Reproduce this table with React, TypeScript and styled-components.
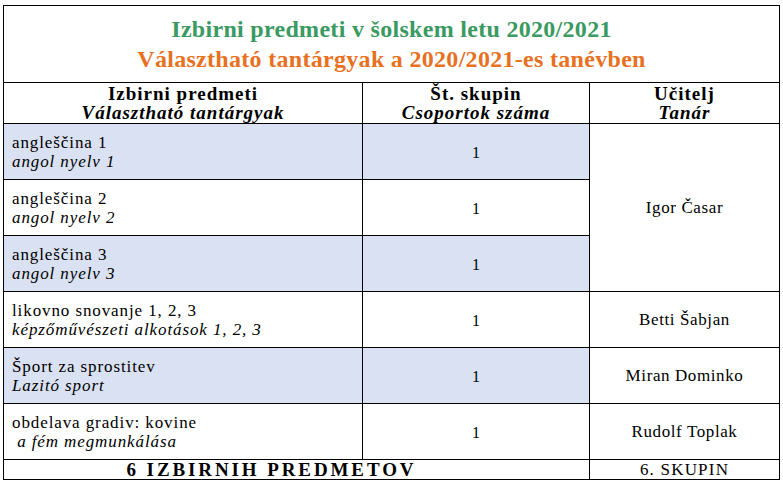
import React from 'react'
import styled, { createGlobalStyle } from 'styled-components'

const serif = '"Liberation Serif", "Times New Roman", serif'

const GlobalStyle = createGlobalStyle`
  html, body {
    margin: 0;
    padding: 0;
    background: #ffffff;
  }
  body {
    font-family: ${serif};
    color: #000000;
  }
`

const Page = styled.div`
  padding: 5px 0 0 3px;
`

const Table = styled.table`
  border-collapse: collapse;
  table-layout: fixed;
  width: 776px;
  border: 1px solid #000;
  font-family: ${serif};
  color: #000;
`

const TitleCell = styled.td`
  height: 76px;
  border: 1px solid #000;
  text-align: center;
  vertical-align: middle;
  padding: 0;
`

const TitleLine = styled.div<{ $color: string }>`
  font-family: ${serif};
  font-weight: bold;
  font-size: 24px;
  letter-spacing: 0.3px;
  line-height: 30px;
  color: ${p => p.$color};
`

const HeadCell = styled.th`
  height: 40px;
  border: 1px solid #000;
  padding: 0;
  text-align: center;
  vertical-align: middle;
  font-family: ${serif};
  font-weight: bold;
  font-size: 19px;
  letter-spacing: 1px;
  line-height: 19px;
`

const Sub = styled.span`
  display: block;
  font-style: italic;
`

const Row = styled.tr<{ $shaded?: boolean }>`
  height: 56px;
  background: ${p => (p.$shaded ? '#d9e1f2' : '#ffffff')};
`

const SubjectCell = styled.td`
  border: 1px solid #000;
  padding: 0 8px;
  vertical-align: middle;
  font-family: ${serif};
  font-size: 17px;
  letter-spacing: 0.9px;
  line-height: 19px;
  white-space: pre;
`

const CountCell = styled.td`
  border: 1px solid #000;
  text-align: center;
  vertical-align: middle;
  font-family: ${serif};
  font-size: 16px;
  padding: 2px 0 0 0;
`

const TeacherCell = styled.td`
  border: 1px solid #000;
  text-align: center;
  vertical-align: middle;
  font-family: ${serif};
  font-size: 17px;
  letter-spacing: 0.6px;
  background: #ffffff;
`

const FootCell = styled.td<{ $bold?: boolean; $shift?: number }>`
  height: 19px;
  border: 1px solid #000;
  padding: 0 ${p => p.$shift ?? 0}px 0 0;
  text-align: center;
  vertical-align: middle;
  font-family: ${serif};
  font-size: ${p => (p.$bold ? 19 : 17)}px;
  line-height: 19px;
  letter-spacing: ${p => (p.$bold ? 2.9 : 1.2)}px;
  font-weight: ${p => (p.$bold ? 'bold' : 'normal')};
`

type Subject = {
  sl: string
  hu: string
  count: string
  teacher?: string
  span?: number
  shaded?: boolean
}

const subjects: Subject[] = [
  { sl: 'angleščina 1', hu: 'angol nyelv 1', count: '1', teacher: 'Igor Časar', span: 3, shaded: true },
  { sl: 'angleščina 2', hu: 'angol nyelv 2', count: '1' },
  { sl: 'angleščina 3', hu: 'angol nyelv 3', count: '1', shaded: true },
  { sl: 'likovno snovanje 1, 2, 3', hu: 'képzőművészeti alkotások 1, 2, 3', count: '1', teacher: 'Betti Šabjan' },
  { sl: 'Šport za sprostitev', hu: 'Lazitó sport', count: '1', teacher: 'Miran Dominko', shaded: true },
  { sl: 'obdelava gradiv: kovine', hu: ' a fém megmunkálása', count: '1', teacher: 'Rudolf Toplak' },
]

export default function App() {
  return (
    <Page>
      <GlobalStyle />
      <Table>
        <colgroup>
          <col style={{ width: 359 }} />
          <col style={{ width: 227 }} />
          <col style={{ width: 190 }} />
        </colgroup>
        <tbody>
          <tr>
            <TitleCell colSpan={3}>
              <TitleLine $color="#3a9a62">Izbirni predmeti v šolskem letu 2020/2021</TitleLine>
              <TitleLine $color="#e8711f">Választható tantárgyak a 2020/2021-es tanévben</TitleLine>
            </TitleCell>
          </tr>
          <tr>
            <HeadCell>
              Izbirni predmeti
              <Sub>Választható tantárgyak</Sub>
            </HeadCell>
            <HeadCell>
              Št. skupin
              <Sub>Csoportok száma</Sub>
            </HeadCell>
            <HeadCell>
              Učitelj
              <Sub>Tanár</Sub>
            </HeadCell>
          </tr>
          {subjects.map(s => (
            <Row key={s.sl} $shaded={s.shaded}>
              <SubjectCell>
                {s.sl}
                <Sub>{s.hu}</Sub>
              </SubjectCell>
              <CountCell>{s.count}</CountCell>
              {s.teacher && <TeacherCell rowSpan={s.span ?? 1}>{s.teacher}</TeacherCell>}
            </Row>
          ))}
          <tr>
            <FootCell colSpan={2} $bold $shift={50}>6 IZBIRNIH PREDMETOV</FootCell>
            <FootCell>6. SKUPIN</FootCell>
          </tr>
        </tbody>
      </Table>
    </Page>
  )
}
